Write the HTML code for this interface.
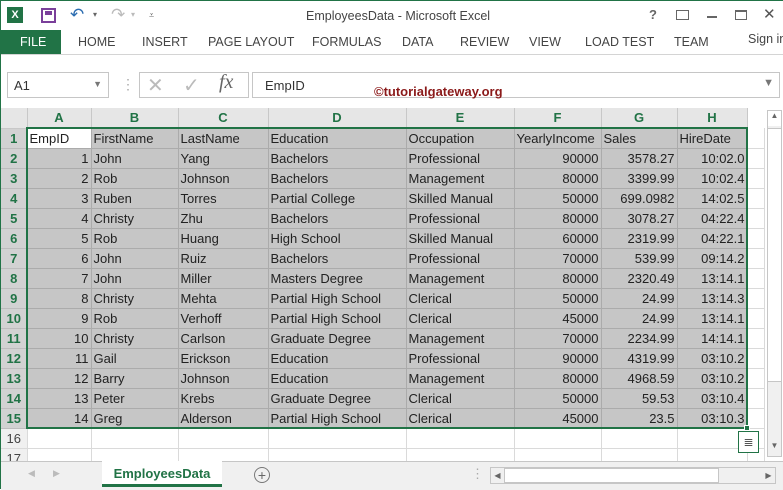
<!DOCTYPE html>
<html><head><style>
*{margin:0;padding:0;box-sizing:border-box}
body{width:783px;height:489px;overflow:hidden;background:#fff;font-family:"Liberation Sans",sans-serif;position:relative;border-left:1px solid #217346;border-top:1px solid #217346}
.a{position:absolute;white-space:nowrap}
.tab{position:absolute;top:34px;font-size:12.5px;color:#444;white-space:nowrap}
table{position:absolute;left:0;top:107px;border-collapse:collapse;table-layout:fixed}
td{height:20px;font-size:13px;color:#222;border-right:1px solid #ababab;border-bottom:1px solid #ababab;background:#c6c6c6;padding:0 2px;white-space:nowrap;overflow:hidden}
td.r{text-align:right}
td.h{background:#d2d2d2;color:#217346;font-weight:bold;text-align:center;border-color:#bdbdbd;font-size:13px}
tr.ch td{background:#e6e6e6;color:#217346;font-weight:bold;text-align:center;height:20px;border-color:#c8c8c8}
tr.e td{background:#fff;border-color:#dadada}
tr.e td.h{background:#f0f0f0;color:#444;font-weight:normal}
</style></head><body>
<div class="a" style="left:6px;top:6px;width:16px;height:16px;background:#217346;color:#fff;font-size:11px;font-weight:bold;text-align:center;line-height:16px">X</div>
<div class="a" style="left:40px;top:7px;width:15px;height:15px;border:2px solid #7a3f9a;background:#fff"><div style="margin:1px 2px;height:4px;background:#7a3f9a"></div></div>
<div class="a" style="left:69px;top:4px;font-size:17px;color:#2b6cb0">↶</div>
<div class="a" style="left:92px;top:9px;font-size:8px;color:#666">▾</div>
<div class="a" style="left:110px;top:4px;font-size:17px;color:#bbb">↷</div>
<div class="a" style="left:130px;top:9px;font-size:8px;color:#bbb">▾</div>
<div class="a" style="left:148px;top:9px;font-size:9px;color:#666">⩡</div>
<div class="a" style="left:305px;top:8px;font-size:12.5px;color:#444">EmployeesData - Microsoft Excel</div>
<div class="a" style="left:648px;top:6px;font-size:13px;color:#666;font-weight:bold">?</div>
<div class="a" style="left:675px;top:9px;width:13px;height:10px;border:1px solid #666"></div>
<div class="a" style="left:706px;top:15px;width:10px;height:2px;background:#666"></div>
<div class="a" style="left:734px;top:9px;width:12px;height:10px;border:1px solid #666;border-top-width:2px"></div>
<div class="a" style="left:762px;top:4px;font-size:15px;color:#555">✕</div>
<div class="a" style="left:0;top:29px;width:60px;height:24px;background:#217346;color:#fff;font-size:12.5px;line-height:24px;padding-left:19px">FILE</div>
<div class="tab" style="left:77px">HOME</div>
<div class="tab" style="left:141px">INSERT</div>
<div class="tab" style="left:207px">PAGE LAYOUT</div>
<div class="tab" style="left:311px">FORMULAS</div>
<div class="tab" style="left:401px">DATA</div>
<div class="tab" style="left:459px">REVIEW</div>
<div class="tab" style="left:528px">VIEW</div>
<div class="tab" style="left:584px">LOAD TEST</div>
<div class="tab" style="left:673px">TEAM</div>
<div class="tab" style="left:747px;top:31px">Sign in</div>
<div class="a" style="left:0;top:53px;width:783px;height:1px;background:#d4d4d4"></div>
<div class="a" style="left:6px;top:71px;width:102px;height:26px;border:1px solid #c6c6c6;font-size:13px;color:#333;padding:5px 6px">A1<span style="position:absolute;right:6px;top:6px;font-size:9px;color:#777">▼</span></div>
<div class="a" style="left:120px;top:75px;font-size:14px;color:#aaa">⋮</div>
<div class="a" style="left:138px;top:71px;width:110px;height:26px;border:1px solid #c6c6c6"></div>
<div class="a" style="left:146px;top:72px;font-size:20px;color:#bbb">✕</div>
<div class="a" style="left:182px;top:72px;font-size:20px;color:#bbb">✓</div>
<div class="a" style="left:218px;top:70px;font-size:20px;color:#666;font-family:'Liberation Serif',serif;font-style:italic">fx</div>
<div class="a" style="left:251px;top:71px;width:528px;height:26px;border:1px solid #c6c6c6;font-size:13px;color:#333;padding:5px 12px">EmpID<span style="position:absolute;right:5px;top:4px;font-size:11px;color:#777">▼</span></div>
<div class="a" style="left:373px;top:83px;font-size:13px;font-weight:bold;color:#8b1a1a">©tutorialgateway.org</div>
<div class="a" style="left:0;top:107px;width:27px;height:20px;background:#e6e6e6;z-index:0"></div>
<table>
<colgroup><col style="width:26px"><col style="width:64px"><col style="width:87px"><col style="width:90px"><col style="width:138px"><col style="width:108px"><col style="width:87px"><col style="width:76px"><col style="width:70px"><col style="width:17px"></colgroup>
<tr class="ch"><td style="background:#e6e6e6"></td><td>A</td><td>B</td><td>C</td><td>D</td><td>E</td><td>F</td><td>G</td><td>H</td><td style="background:#fff;border:none"></td></tr>
<tr><td class="h">1</td><td style="background:#fff">EmpID</td><td>FirstName</td><td>LastName</td><td>Education</td><td>Occupation</td><td>YearlyIncome</td><td>Sales</td><td>HireDate</td><td style="background:#fff;border-color:#dadada"></td></tr>
<tr><td class="h">2</td><td class="r">1</td><td>John</td><td>Yang</td><td>Bachelors</td><td>Professional</td><td class="r">90000</td><td class="r">3578.27</td><td class="r">10:02.0</td><td style="background:#fff;border-color:#dadada"></td></tr>
<tr><td class="h">3</td><td class="r">2</td><td>Rob</td><td>Johnson</td><td>Bachelors</td><td>Management</td><td class="r">80000</td><td class="r">3399.99</td><td class="r">10:02.4</td><td style="background:#fff;border-color:#dadada"></td></tr>
<tr><td class="h">4</td><td class="r">3</td><td>Ruben</td><td>Torres</td><td>Partial College</td><td>Skilled Manual</td><td class="r">50000</td><td class="r">699.0982</td><td class="r">14:02.5</td><td style="background:#fff;border-color:#dadada"></td></tr>
<tr><td class="h">5</td><td class="r">4</td><td>Christy</td><td>Zhu</td><td>Bachelors</td><td>Professional</td><td class="r">80000</td><td class="r">3078.27</td><td class="r">04:22.4</td><td style="background:#fff;border-color:#dadada"></td></tr>
<tr><td class="h">6</td><td class="r">5</td><td>Rob</td><td>Huang</td><td>High School</td><td>Skilled Manual</td><td class="r">60000</td><td class="r">2319.99</td><td class="r">04:22.1</td><td style="background:#fff;border-color:#dadada"></td></tr>
<tr><td class="h">7</td><td class="r">6</td><td>John</td><td>Ruiz</td><td>Bachelors</td><td>Professional</td><td class="r">70000</td><td class="r">539.99</td><td class="r">09:14.2</td><td style="background:#fff;border-color:#dadada"></td></tr>
<tr><td class="h">8</td><td class="r">7</td><td>John</td><td>Miller</td><td>Masters Degree</td><td>Management</td><td class="r">80000</td><td class="r">2320.49</td><td class="r">13:14.1</td><td style="background:#fff;border-color:#dadada"></td></tr>
<tr><td class="h">9</td><td class="r">8</td><td>Christy</td><td>Mehta</td><td>Partial High School</td><td>Clerical</td><td class="r">50000</td><td class="r">24.99</td><td class="r">13:14.3</td><td style="background:#fff;border-color:#dadada"></td></tr>
<tr><td class="h">10</td><td class="r">9</td><td>Rob</td><td>Verhoff</td><td>Partial High School</td><td>Clerical</td><td class="r">45000</td><td class="r">24.99</td><td class="r">13:14.1</td><td style="background:#fff;border-color:#dadada"></td></tr>
<tr><td class="h">11</td><td class="r">10</td><td>Christy</td><td>Carlson</td><td>Graduate Degree</td><td>Management</td><td class="r">70000</td><td class="r">2234.99</td><td class="r">14:14.1</td><td style="background:#fff;border-color:#dadada"></td></tr>
<tr><td class="h">12</td><td class="r">11</td><td>Gail</td><td>Erickson</td><td>Education</td><td>Professional</td><td class="r">90000</td><td class="r">4319.99</td><td class="r">03:10.2</td><td style="background:#fff;border-color:#dadada"></td></tr>
<tr><td class="h">13</td><td class="r">12</td><td>Barry</td><td>Johnson</td><td>Education</td><td>Management</td><td class="r">80000</td><td class="r">4968.59</td><td class="r">03:10.2</td><td style="background:#fff;border-color:#dadada"></td></tr>
<tr><td class="h">14</td><td class="r">13</td><td>Peter</td><td>Krebs</td><td>Graduate Degree</td><td>Clerical</td><td class="r">50000</td><td class="r">59.53</td><td class="r">03:10.4</td><td style="background:#fff;border-color:#dadada"></td></tr>
<tr><td class="h">15</td><td class="r">14</td><td>Greg</td><td>Alderson</td><td>Partial High School</td><td>Clerical</td><td class="r">45000</td><td class="r">23.5</td><td class="r">03:10.3</td><td style="background:#fff;border-color:#dadada"></td></tr>
<tr class="e"><td class="h">16</td><td></td><td></td><td></td><td></td><td></td><td></td><td></td><td></td><td></td></tr>
<tr class="e"><td class="h">17</td><td></td><td></td><td></td><td></td><td></td><td></td><td></td><td></td><td></td></tr>
</table>
<div class="a" style="left:25px;top:126px;width:722px;height:302px;border:2px solid #217346"></div>
<div class="a" style="left:743px;top:424px;width:6px;height:6px;background:#217346;border:1px solid #fff"></div>
<div class="a" style="left:737px;top:430px;width:21px;height:22px;border:1px solid #217346;background:#fff;font-size:12px;color:#555;text-align:center;line-height:20px">≣</div>
<div class="a" style="left:764px;top:107px;width:19px;height:353px;background:#fff"></div>
<div class="a" style="left:766px;top:109px;width:15px;height:347px;border:1px solid #c6c6c6;background:#f0f0f0"></div>
<div class="a" style="left:767px;top:110px;width:13px;height:15px;background:#fff;font-size:8px;color:#666;text-align:center">▲</div>
<div class="a" style="left:767px;top:127px;width:13px;height:254px;background:#fff;border-top:1px solid #c6c6c6;border-bottom:1px solid #c6c6c6"></div>
<div class="a" style="left:767px;top:440px;width:13px;height:15px;font-size:8px;color:#666;text-align:center">▼</div>
<div class="a" style="left:0;top:460px;width:783px;height:29px;background:#f0f0f0;border-top:1px solid #c6c6c6"></div>
<div class="a" style="left:27px;top:467px;font-size:9px;color:#bbb">◀</div>
<div class="a" style="left:52px;top:467px;font-size:9px;color:#bbb">▶</div>
<div class="a" style="left:101px;top:460px;width:120px;height:26px;background:#fff;border-bottom:3px solid #217346;color:#217346;font-weight:bold;font-size:13px;text-align:center;line-height:26px">EmployeesData</div>
<div class="a" style="left:253px;top:466px;width:16px;height:16px;border:1px solid #777;border-radius:50%;font-size:14px;color:#666;text-align:center;line-height:14px">+</div>
<div class="a" style="left:470px;top:465px;font-size:13px;color:#aaa">⋮</div>
<div class="a" style="left:489px;top:466px;width:286px;height:17px;border:1px solid #c6c6c6;background:#f0f0f0"></div>
<div class="a" style="left:490px;top:467px;width:13px;height:15px;font-size:8px;color:#666;line-height:15px;text-align:center">◀</div>
<div class="a" style="left:503px;top:467px;width:215px;height:15px;background:#fff;border:1px solid #c6c6c6"></div>
<div class="a" style="left:761px;top:467px;width:13px;height:15px;font-size:8px;color:#666;line-height:15px;text-align:center">▶</div>
</body></html>
